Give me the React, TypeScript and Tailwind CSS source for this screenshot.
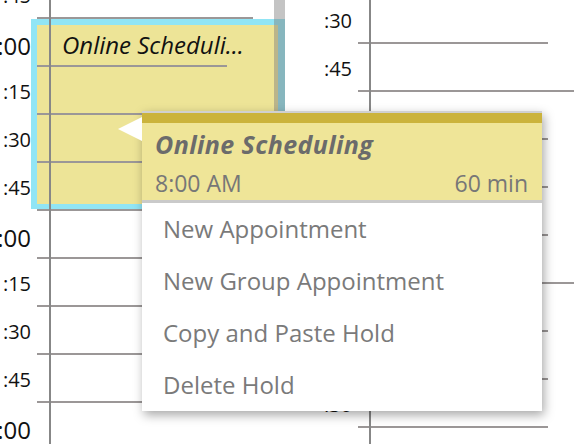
import React from 'react';

type Slot = { label: string; hour: boolean };

const leftSlots: Slot[] = [
  { label: ':45', hour: false },
  { label: '8:00', hour: true },
  { label: ':15', hour: false },
  { label: ':30', hour: false },
  { label: ':45', hour: false },
  { label: '9:00', hour: true },
  { label: ':15', hour: false },
  { label: ':30', hour: false },
  { label: ':45', hour: false },
  { label: '10:00', hour: true },
];

const rightSlots: Slot[] = [
  { label: ':30', hour: false },
  { label: ':45', hour: false },
  { label: '9:00', hour: true },
  { label: ':15', hour: false },
  { label: ':30', hour: false },
  { label: ':45', hour: false },
  { label: '10:00', hour: true },
  { label: ':15', hour: false },
  { label: ':30', hour: false },
  { label: ':45', hour: false },
];

const menuItems = ['New Appointment', 'New Group Appointment', 'Copy and Paste Hold', 'Delete Hold'];

const DayColumn: React.FC<{ slots: Slot[]; labelWidth: string; ruleLeft: string; width: string; offset: string }> = ({
  slots,
  labelWidth,
  ruleLeft,
  width,
  offset,
}) => (
  <div className={`relative ${width} ${offset}`}>
    {slots.map((s, i) => (
      <div key={i} className="flex h-[48px]">
        <div className={`flex ${labelWidth} shrink-0 justify-end pr-[6px]`}>
          {s.hour ? (
            <span className="shrink-0 whitespace-nowrap pt-[17px] text-[24px] leading-none">{s.label}</span>
          ) : (
            <span className="shrink-0 whitespace-nowrap pt-[17px] text-[20px] leading-none">{s.label}</span>
          )}
        </div>
        <div className={`h-full border-t-2 border-[#9b9797] ${s.hour ? 'w-[216px]' : 'w-[190px]'}`} />
      </div>
    ))}
    {/* day divider */}
    <div className={`absolute top-0 bottom-0 ${ruleLeft} w-[2px] bg-[#878787]`} />
  </div>
);

const App: React.FC = () => {
  return (
    <div className="relative h-[444px] w-[574px] overflow-hidden bg-white font-['Open_Sans',sans-serif] text-[#111]">
      {/* hold block */}
      <div className="absolute left-[31px] top-[19px] z-0 h-[190px] w-[254px] border-t-[6px] border-r-[7px] border-b-[5px] border-l-[6px] border-[#91e5f5] bg-[#ede497]">
        <div className="pl-[25px] pt-[5px] text-[24px] leading-[30px] italic whitespace-nowrap">Online Scheduli...</div>
      </div>

      <div className="relative z-10 flex items-start">
        <DayColumn slots={leftSlots} labelWidth="w-[37px]" ruleLeft="left-[49px]" width="w-[285px]" offset="-mt-[31px]" />
        <DayColumn slots={rightSlots} labelWidth="w-[73px]" ruleLeft="left-[84px]" width="w-[289px]" offset="-mt-[6px]" />
      </div>

      {/* scrollbar thumb */}
      <div className="absolute left-[274px] top-0 z-10 h-[200px] w-[11px] bg-[#7d7d7d]/45" />

      {/* context menu */}
      <div className="absolute left-[142px] top-[111px] z-20 w-[400px] border-t-2 border-[#d0d0d0] bg-white shadow-[2px_4px_10px_rgba(0,0,0,0.35)]">
        <div className="absolute -left-[24px] top-[4px] h-0 w-0 border-y-[12px] border-r-[24px] border-y-transparent border-r-white" />
        <div className="h-[10px] bg-[#cbb33c]" />
        <div className="border-b-[3px] border-[#cacaca] bg-[#efe598] pt-[6px] pb-[2px] pl-[13px] pr-[14px]">
          <div className="text-[25px] leading-[30px] font-bold italic tracking-[0.4px] text-[#6b6b6b]">Online Scheduling</div>
          <div className="mt-[9px] flex justify-between text-[23px] leading-[30px] text-[#777]">
            <span>8:00 AM</span>
            <span>60 min</span>
          </div>
        </div>
        <ul>
          {menuItems.map((item) => (
            <li key={item} className="h-[52px] pl-[21px] text-[24px] leading-[52px] text-[#7a7a7a]">
              {item}
            </li>
          ))}
        </ul>
      </div>
    </div>
  );
};

export default App;
